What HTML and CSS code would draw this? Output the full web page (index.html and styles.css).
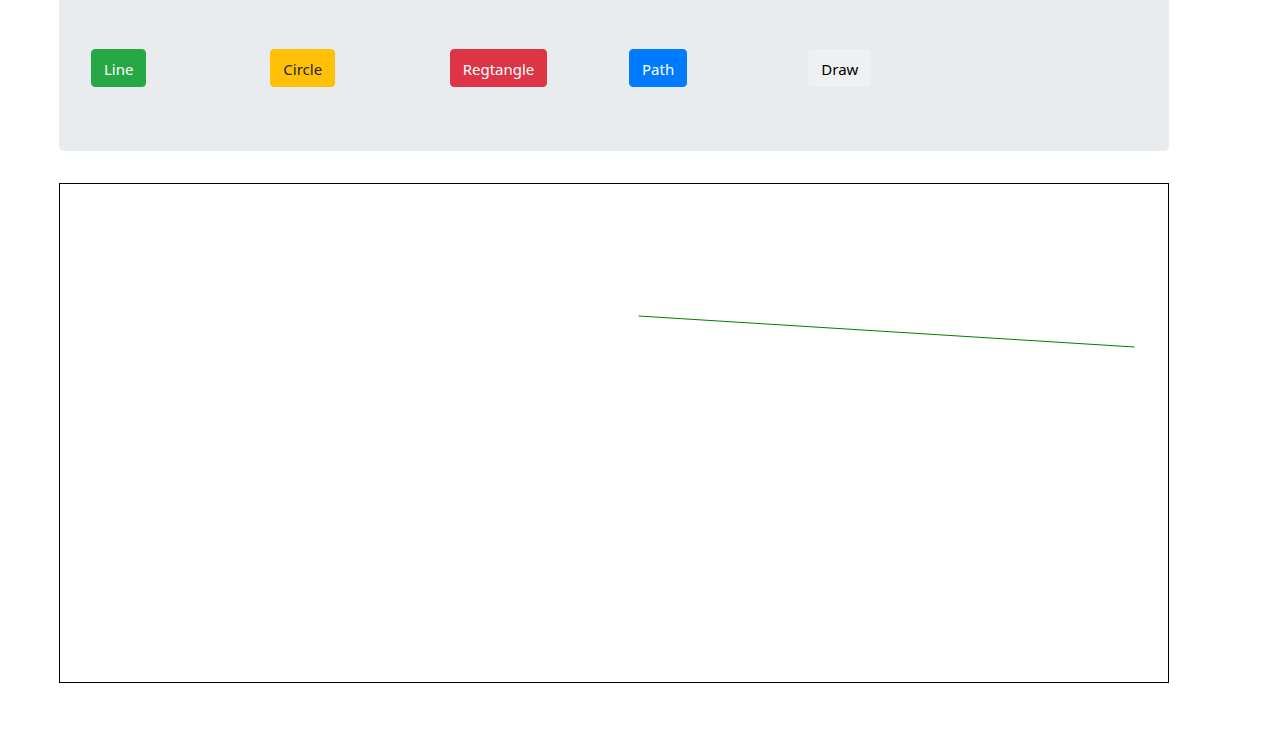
FILE: index.html
```html
<!DOCTYPE html>
<html lang="en">
	<head>
		<meta charset="UTF-8" />
		<meta name="viewport" content="width=device-width, initial-scale=1.0" />
		<title>Canvas shapes</title>
		<link rel="stylesheet" href="styles.css">
	</head>
	<body>
		<div class="container">
			<div class="jumbotron">
				<div class="row">
					<div class="col"><button class="btn btn-success">Line</button></div>
					<div class="col"><button class="btn btn-warning">Circle</button></div>
					<div class="col"><button class="btn btn-danger">Regtangle</button></div>
					<div class="col"><button class="btn btn-primary">Path</button></div>
					<div class="col"><button class="btn btn-light">Draw</button></div>
				</div>
			</div>
			<div class="board">
				<svg class="canvas" width="1108" height="498" viewBox="0 0 1108 498">
					<line x1="578.5" y1="132" x2="1074.5" y2="163" stroke="#008000" stroke-width="1" />
				</svg>
			</div>
		</div>
	</body>
</html>
```

FILE: styles.css
```css
body,
html {
	margin: 0;
	padding: 0;
	background: #ffffff;
}
body {
	font-family: "Noto Sans", "Open Sans", Arial, sans-serif;
	font-size: 16px;
	color: #212529;
}
.container {
	width: 1110px;
	margin-left: 59px;
}
.jumbotron {
	background-color: #e9ecef;
	border-radius: 0 0 5px 5px;
	padding: 49px 32px 64px;
	margin-bottom: 32px;
}
.row {
	display: flex;
	margin: 0 -15px;
}
.col {
	flex: 0 0 179.33px;
	box-sizing: border-box;
	padding: 0 15px;
}
.btn {
	font-family: inherit;
	font-size: 15px;
	line-height: 24px;
	height: 38px;
	padding: 7px 12px 5px;
	border: 1px solid transparent;
	border-radius: 4px;
	cursor: pointer;
}
.btn-success {
	background: #28a745;
	border-color: #28a745;
	color: #ffffff;
}
.btn-warning {
	background: #ffc107;
	border-color: #ffc107;
	color: #212529;
}
.btn-danger {
	background: #dc3545;
	border-color: #dc3545;
	color: #ffffff;
}
.btn-primary {
	background: #007bff;
	border-color: #007bff;
	color: #ffffff;
}
.btn-light {
	background: #eef0f1;
	border-color: #eef0f1;
	color: #000000;
}
.board {
	border: 1px solid #000000;
	height: 498px;
}
.canvas {
	display: block;
}
```
